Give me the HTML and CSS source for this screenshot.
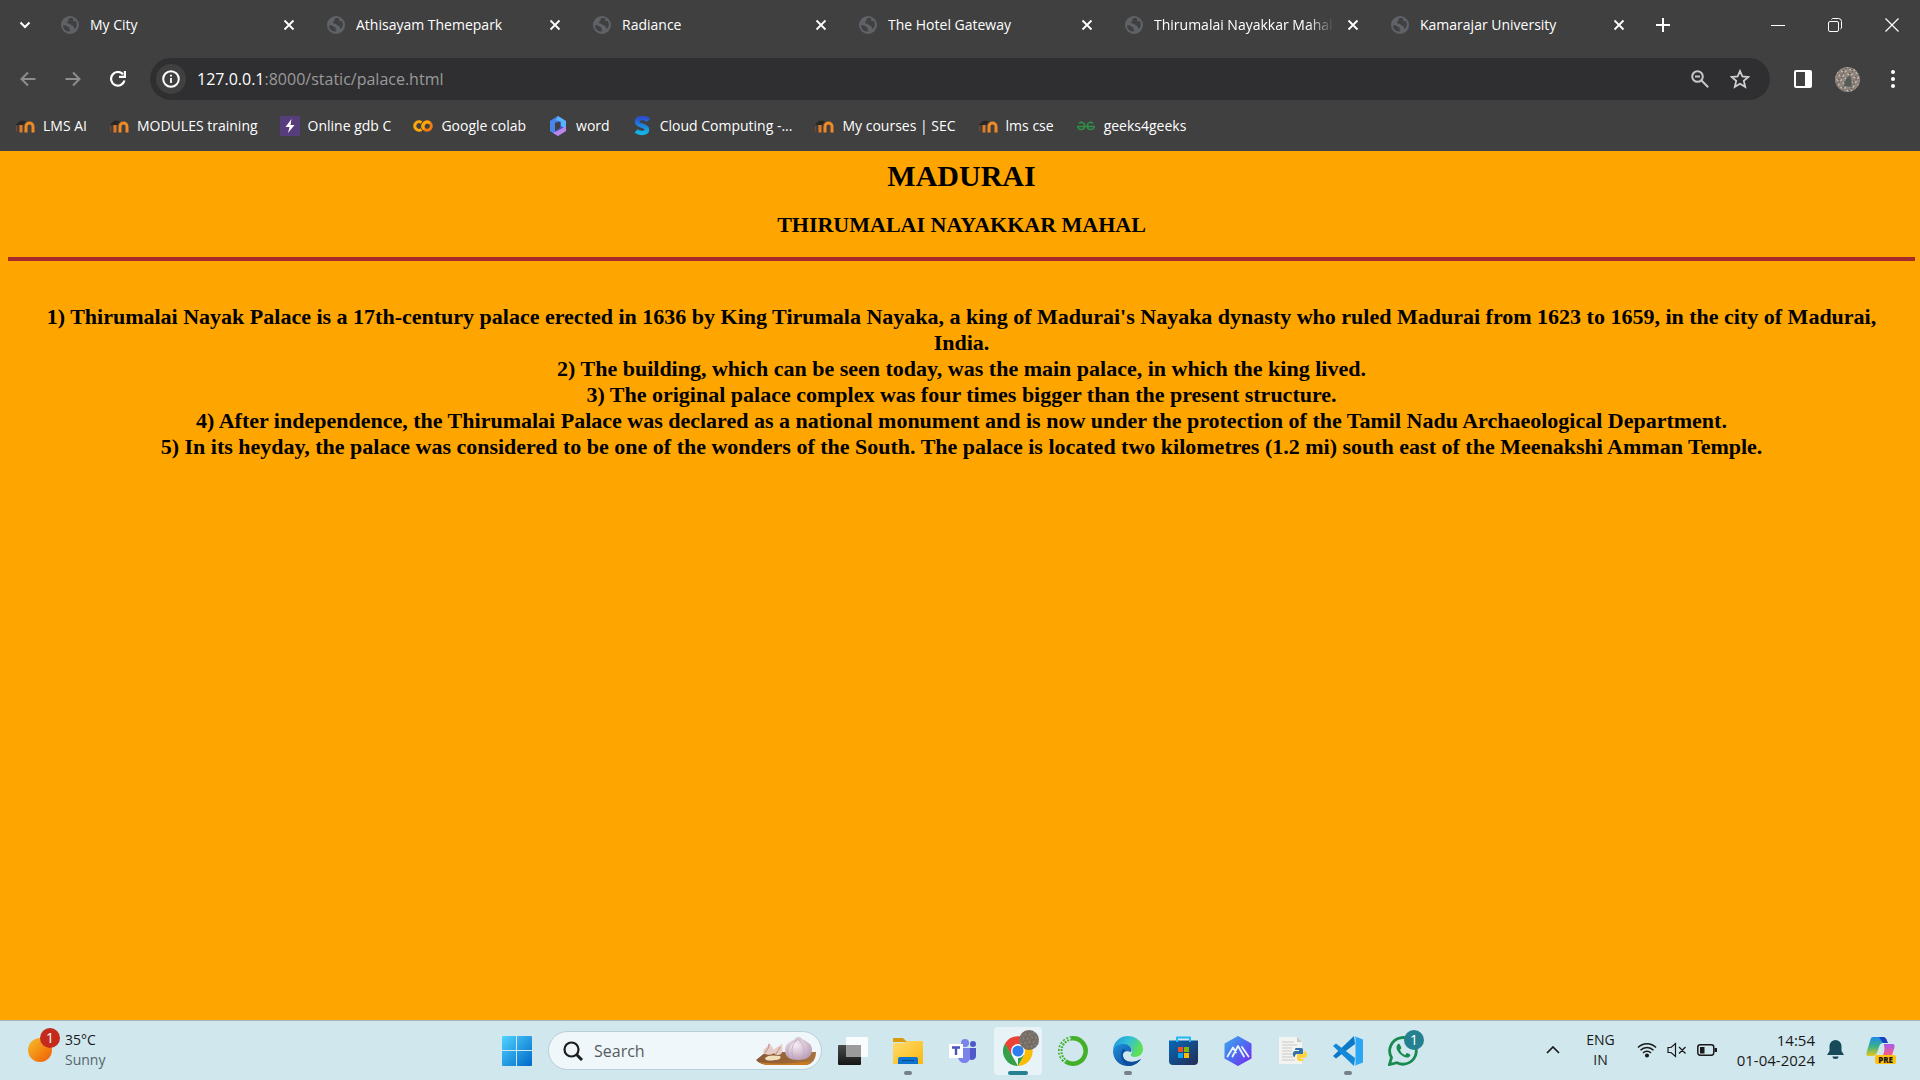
FILE: index.html
```html
<!DOCTYPE html>
<html lang="en">
<head>
<meta charset="utf-8">
<title>Thirumalai Nayakkar Mahal</title>
<link rel="stylesheet" href="styles.css">
</head>
<body>
<svg class="defs" aria-hidden="true">
  <defs>
    <linearGradient id="g-sun" x1="0" y1="0" x2="1" y2="1"><stop offset="0" stop-color="#f2c230"/><stop offset=".6" stop-color="#f4820f"/><stop offset="1" stop-color="#f05a0e"/></linearGradient>
    <linearGradient id="g-win" x1="0" y1="0" x2="1" y2="1"><stop offset="0" stop-color="#4fd3ff"/><stop offset="1" stop-color="#0068c8"/></linearGradient>
    <linearGradient id="g-dark" x1="0" y1="0" x2="0" y2="1"><stop offset="0" stop-color="#4a4a4a"/><stop offset="1" stop-color="#161616"/></linearGradient>
    <linearGradient id="g-folder" x1="0" y1="0" x2="1" y2="1"><stop offset="0" stop-color="#ffdc6e"/><stop offset="1" stop-color="#fbb80f"/></linearGradient>
    <linearGradient id="g-edge" x1="0" y1="0" x2="1" y2=".4"><stop offset="0" stop-color="#1a94e0"/><stop offset=".55" stop-color="#35c1d4"/><stop offset="1" stop-color="#5fe052"/></linearGradient>
    <linearGradient id="g-edge2" x1="0" y1="0" x2="1" y2="1"><stop offset="0" stop-color="#1f8fdf"/><stop offset="1" stop-color="#0c3f88"/></linearGradient>
    <linearGradient id="g-store" x1="0" y1="0" x2="1" y2="1"><stop offset="0" stop-color="#0669b8"/><stop offset="1" stop-color="#262b54"/></linearGradient>
    <linearGradient id="g-hex" x1="0" y1="0" x2="1" y2="1"><stop offset="0" stop-color="#3fa6ea"/><stop offset=".5" stop-color="#4d6cf0"/><stop offset="1" stop-color="#7a28f0"/></linearGradient>
    <linearGradient id="g-word" x1="0" y1="1" x2="1" y2="0"><stop offset="0" stop-color="#c48be8"/><stop offset=".5" stop-color="#4a5fd8"/><stop offset="1" stop-color="#56b8f8"/></linearGradient>
    <linearGradient id="g-s" x1="0" y1="0" x2="0" y2="1"><stop offset="0" stop-color="#2b4fd0"/><stop offset="1" stop-color="#12b4e8"/></linearGradient>
    <linearGradient id="g-board" x1="0" y1="0" x2="1" y2="0"><stop offset="0" stop-color="#8a5a35"/><stop offset="1" stop-color="#a8713c"/></linearGradient>
    <radialGradient id="g-garlic" cx=".4" cy=".35" r=".7"><stop offset="0" stop-color="#f6eef4"/><stop offset="1" stop-color="#b99bb5"/></radialGradient>
    <linearGradient id="g-cop1" x1="0" y1="0" x2="0" y2="1"><stop offset="0" stop-color="#1b8be8"/><stop offset=".5" stop-color="#3db08c"/><stop offset="1" stop-color="#e8c81c"/></linearGradient>
    <linearGradient id="g-cop2" x1="0" y1="0" x2="0" y2="1"><stop offset="0" stop-color="#a45cf0"/><stop offset=".5" stop-color="#ee5a90"/><stop offset="1" stop-color="#f88a50"/></linearGradient>
    <pattern id="p-noise" width="7" height="5" patternUnits="userSpaceOnUse" patternTransform="rotate(27)"><rect width="7" height="5" fill="#8d867e"/><path d="M0 0h2v1H0zM4 3h1v2H4z" fill="#d8d0c8"/><path d="M3 1h1v1H3zM1 4h2v1H1z" fill="#4c5a50"/><path d="M5 0h1v1H5zM2 2h1v1H2z" fill="#b85a4c"/></pattern>
    <symbol id="globe" viewBox="0 0 18 18"><circle cx="9" cy="9" r="9" fill="#5f6368"/><path d="M2 9.200C4.500 9 6 9.500 7 11c1.500 0 2 .800 1.500 2 0 1.500 1 2 2 1.500C9 16 6 15.800 4 14 2.500 12.500 2 11 2 9.200zM8 2.200c-1 1.300.500 1.800-1 2.800-1.500.300-1 1.500-.500 2.500 1.500 0 3 .500 4 2 1.500 0 2.500 1 2.500 2.500 0 1 .500 1 1 .700C16.500 10.500 16.300 7 14.500 4.800c-1 .700-2 .700-2.500-.300C12 3 13 3 12 2.500 11 2 9.500 1.900 8 2.200z" fill="#404040"/></symbol>
    <symbol id="x" viewBox="0 0 12 12"><path d="M1.500 1.500l9 9M10.500 1.500l-9 9" stroke="#fff" stroke-width="1.800"/></symbol>
    <symbol id="moodle" viewBox="0 0 20 20"><path d="M11 16.500v-6a3.500 3.500 0 0 1 7 0v6" fill="none" stroke="#f08a26" stroke-width="3"/><path d="M6 16.500V9" stroke="#e07a24" stroke-width="3"/><path d="M1.500 15.500V10" stroke="#7a4a2c"/><path d="M1 8.500l4.500-3.800L11 5 8 9H3z" fill="#2a2422"/></symbol>
  </defs>
</svg>

<header class="browser">
  <div class="tabstrip">
    <button class="tab-search" aria-label="Search tabs"><svg width="12" height="8" viewBox="0 0 12 8"><path d="M1.500 1.500L6 6l4.500-4.500" fill="none" stroke="#fff" stroke-width="2"/></svg></button>
    <nav class="tabs" aria-label="Tabs">
      <div class="tab"><svg class="favicon"><use href="#globe"/></svg><a class="tab-title" href="#">My City</a><button class="tab-close" aria-label="Close tab"><svg><use href="#x"/></svg></button></div>
      <div class="tab"><svg class="favicon"><use href="#globe"/></svg><a class="tab-title" href="#">Athisayam Themepark</a><button class="tab-close" aria-label="Close tab"><svg><use href="#x"/></svg></button></div>
      <div class="tab"><svg class="favicon"><use href="#globe"/></svg><a class="tab-title" href="#">Radiance</a><button class="tab-close" aria-label="Close tab"><svg><use href="#x"/></svg></button></div>
      <div class="tab"><svg class="favicon"><use href="#globe"/></svg><a class="tab-title" href="#">The Hotel Gateway</a><button class="tab-close" aria-label="Close tab"><svg><use href="#x"/></svg></button></div>
      <div class="tab"><svg class="favicon"><use href="#globe"/></svg><a class="tab-title tab-title-fade" href="#">Thirumalai Nayakkar Mahal</a><button class="tab-close" aria-label="Close tab"><svg><use href="#x"/></svg></button></div>
      <div class="tab"><svg class="favicon"><use href="#globe"/></svg><a class="tab-title" href="#">Kamarajar University</a><button class="tab-close" aria-label="Close tab"><svg><use href="#x"/></svg></button></div>
    </nav>
    <button class="new-tab" aria-label="New tab"><svg width="14" height="14" viewBox="0 0 14 14"><path d="M7 0v14M0 7h14" stroke="#fff" stroke-width="2"/></svg></button>
    <div class="window-controls">
      <button aria-label="Minimize"><svg width="14" height="14" viewBox="0 0 14 14"><path d="M0 7.500h14" stroke="#fff"/></svg></button>
      <button aria-label="Restore"><svg width="14" height="14" viewBox="0 0 14 14" fill="none" stroke="#fff"><rect x=".5" y="3.500" width="10" height="10" rx="1.500"/><path d="M3.500 1.500a2 2 0 0 1 1-1h6a3 3 0 0 1 3 3v6.500a2 2 0 0 1-1 1"/></svg></button>
      <button aria-label="Close"><svg width="14" height="14" viewBox="0 0 14 14"><path d="M.5.500l13 13M13.500.500l-13 13" stroke="#fff" stroke-width="1.200"/></svg></button>
    </div>
  </div>

  <div class="toolbar">
    <div class="nav-buttons">
      <button aria-label="Back"><svg width="16" height="16" viewBox="0 0 16 16"><path d="M15.500 8H2M8 1.500L1.500 8 8 14.500" fill="none" stroke="#8d8d8d" stroke-width="2"/></svg></button>
      <button aria-label="Forward"><svg width="16" height="16" viewBox="0 0 16 16"><path d="M.5 8H14M8 1.500L14.500 8 8 14.500" fill="none" stroke="#8d8d8d" stroke-width="2"/></svg></button>
      <button aria-label="Reload"><svg width="16" height="16" viewBox="0 0 16 16"><path d="M14.500 9.500A6.800 6.800 0 1 1 13 3.300" fill="none" stroke="#fff" stroke-width="2.200"/><path d="M16 0v7H9V4.800h4.800V0z" fill="#fff"/></svg></button>
    </div>
    <div class="omnibox">
      <button class="site-info" aria-label="Site information"><svg width="18" height="18" viewBox="0 0 18 18"><circle cx="9" cy="9" r="7.800" fill="none" stroke="#fff" stroke-width="2"/><path d="M9 8v5M9 4.800v1.800" stroke="#fff" stroke-width="1.800"/></svg></button>
      <div class="url" role="textbox" aria-label="Address"><span class="host">127.0.0.1</span>:8000/static/palace.html</div>
      <button aria-label="Zoom"><svg width="18" height="18" viewBox="0 0 18 18" fill="none" stroke="#c7c7c7" stroke-width="2"><circle cx="6.500" cy="6.500" r="5.300"/><path d="M10.500 10.500l6.700 6.700M4 6.500h5"/></svg></button>
      <button aria-label="Bookmark this page"><svg width="20" height="20" viewBox="0 0 20 20"><path d="M10 2l2.400 5.500 6 .500-4.600 3.900 1.400 5.900L10 14.700l-5.200 3.100 1.400-5.900L1.600 8l6-.500z" fill="none" stroke="#d0d0d0" stroke-width="1.800"/></svg></button>
    </div>
    <div class="toolbar-end">
      <button aria-label="Side panel"><svg width="18" height="18" viewBox="0 0 18 18"><rect x="1" y="1" width="16" height="16" rx="1" fill="none" stroke="#fff" stroke-width="2"/><path d="M11 1h6v16h-6z" fill="#fff"/></svg></button>
      <button aria-label="Profile"><svg width="25" height="25" viewBox="0 0 25 25"><circle cx="12.500" cy="12.500" r="12.500" fill="url(#p-noise)"/><path d="M9 19c1-5 2-9 6-10 2 3 2 7 1 11z" fill="#555c58"/></svg></button>
      <button aria-label="Menu"><svg width="4" height="18" viewBox="0 0 4 18" fill="#fff"><circle cx="2" cy="2" r="2"/><circle cx="2" cy="9" r="2"/><circle cx="2" cy="16" r="2"/></svg></button>
    </div>
  </div>

  <nav class="bookmarks" aria-label="Bookmarks">
    <a href="#"><svg><use href="#moodle"/></svg>LMS AI</a>
    <a href="#"><svg><use href="#moodle"/></svg>MODULES training</a>
    <a href="#"><svg viewBox="0 0 20 20"><path d="M0 0h20v20H0z" fill="#563d7c"/><path d="M11.500 3L5.500 11h4l-1.500 6 6.500-8h-4z" fill="#fff"/></svg>Online gdb C</a>
    <a href="#"><svg viewBox="0 0 20 20" fill="none" stroke-width="3"><path d="M8.500 6.500a4.300 4.300 0 1 0 0 7" stroke="#fba90a"/><circle cx="14" cy="10" r="4.300" stroke="#f27c12"/><path d="M10.800 13a4.300 4.300 0 0 1 6-6" stroke="#fba90a"/></svg>Google colab</a>
    <a href="#"><svg viewBox="0 0 20 20"><path d="M10 0l8 5v10l-8 5-8-5V5z" fill="#3f57cf"/><path d="M10 0L2 5v10l5 3V7l6-4z" fill="#4a86ea"/><path d="M10 0l8 5v8l-5-3V6L8 4z" fill="#58b4f6"/><path d="M18 10v5l-8 5-5-3 8-4z" fill="#bd86e4"/><path d="M7 7l5-1v6l-5 3z" fill="#404040"/></svg>word</a>
    <a href="#"><svg viewBox="0 0 20 20"><path d="M16.500 4.500C13 .500 5 1.500 5 6c0 4 10 3 10 7.500 0 4-7 4.500-11 1.500" fill="none" stroke="url(#g-s)" stroke-width="4.500"/></svg>Cloud Computing -...</a>
    <a href="#"><svg><use href="#moodle"/></svg>My courses | SEC</a>
    <a href="#"><svg><use href="#moodle"/></svg>lms cse</a>
    <a href="#"><svg viewBox="0 0 20 20" fill="none" stroke="#2f8d46" stroke-width="1.600"><path d="M1 10.500h18M3 7.500c2-2 5.500-1 5.500 1.500v1.500c0 4-6 4-6.500.500M17 7.500c-2-2-5.500-1-5.500 1.500v1.500c0 4 6 4 6.500.500"/></svg>geeks4geeks</a>
  </nav>
</header>

<main class="page">
  <h1>MADURAI</h1>
  <h2>THIRUMALAI NAYAKKAR MAHAL</h2>
  <hr>
  <p class="facts">1) Thirumalai Nayak Palace is a 17th-century palace erected in 1636 by King Tirumala Nayaka, a king of Madurai's Nayaka dynasty who ruled Madurai from 1623 to 1659, in the city of Madurai, India.<br>
  2) The building, which can be seen today, was the main palace, in which the king lived.<br>
  3) The original palace complex was four times bigger than the present structure.<br>
  4) After independence, the Thirumalai Palace was declared as a national monument and is now under the protection of the Tamil Nadu Archaeological Department.<br>
  5) In its heyday, the palace was considered to be one of the wonders of the South. The palace is located two kilometres (1.2 mi) south east of the Meenakshi Amman Temple.</p>
</main>

<footer class="taskbar">
  <button class="weather">
    <span class="weather-icon"><svg width="24" height="24" viewBox="0 0 24 24"><circle cx="12" cy="12" r="12" fill="url(#g-sun)"/></svg><span class="badge badge-red">1</span></span>
    <span class="weather-text"><span>35°C</span><span class="muted">Sunny</span></span>
  </button>

  <div class="apps">
    <button class="app" aria-label="Start"><svg width="30" height="30" viewBox="0 0 30 30"><path d="M1 0h13v14H0V1a1 1 0 0 1 1-1zM15 0h14a1 1 0 0 1 1 1v13H15zM0 15h14v15H1a1 1 0 0 1-1-1zM15 15h15v14a1 1 0 0 1-1 1H15z" fill="url(#g-win)"/></svg></button>
    <label class="search">
      <svg width="20" height="20" viewBox="0 0 20 20" fill="none" stroke="#1d1d1d"><circle cx="8.500" cy="8.500" r="7" stroke-width="2.200"/><path d="M13.500 13.500l5.500 5.500" stroke-width="3"/></svg>
      <input type="text" placeholder="Search" aria-label="Search">
      <svg width="62" height="32" viewBox="0 0 62 32"><path d="M1 25l10-8h50c0 6-3 12-10 13H15C8 30 4 28 1 25z" fill="url(#g-board)"/><path d="M4 27c14 2 36 2 52-1-2 3-4 4-6 4H15c-5 0-8-1-11-3z" fill="#c87a1e"/><path d="M42 2c2 1 3-1 4 1 2 2 4 2 6 4 4 2 5 5 5 8 0 7-6 10-14 10S30 22 30 15c0-4 2-7 6-9 2-1 4-2 6-4z" fill="url(#g-garlic)"/><path d="M43 4c-6 4-8 14-4 20M43 4c6 5 8 14 4 20M42 5c-9 3-11 11-8 17" fill="none" stroke="#b7a0b7" stroke-width=".6"/><path d="M14 7c1 4 6 6 5 11-3 3-10 2-11-1 1-5 6-5 6-10zM27 8c0 4 2 8-1 11-3 2-7 1-8-3 2-4 7-4 9-8z" fill="#e6cdc6"/><path d="M14 9c0 4-2 6-4 9M25 12c-1 3-3 4-4 7" fill="none" stroke="#b98f8c"/><path d="M10 23c3-3 8-3 15-2 2 2-1 4-5 4-4 1-10 1-10-2z" fill="#f2e0bd"/></svg>
    </label>
    <button class="app" aria-label="Task view"><svg width="30" height="28" viewBox="0 0 30 28"><rect y="8" width="23" height="20" rx="1" fill="url(#g-dark)"/><rect x="8" width="22" height="20" rx="1" fill="#fff" opacity=".85"/><path d="M8 8h15v12H8z" fill="#9b9b9b"/></svg></button>
    <button class="app running" aria-label="File Explorer"><svg width="30" height="28" viewBox="0 0 30 28"><path d="M0 2a1 1 0 0 1 1-1h9l4 4H0z" fill="#d99a0b"/><path d="M0 6h11l3-2h15a1 1 0 0 1 1 1v22H0z" fill="url(#g-folder)"/><path d="M5 27v-5a2 2 0 0 1 2-2h16a2 2 0 0 1 2 2v5z" fill="#0c73cf"/><path d="M9 23.500h12" stroke="#084a90"/></svg></button>
    <button class="app" aria-label="Teams"><svg width="28" height="26" viewBox="0 0 28 26"><circle cx="16" cy="5" r="4" fill="#7b83eb"/><circle cx="24" cy="6" r="3" fill="#5059c9"/><path d="M19 10h8v8c0 4-5 5-7 3z" fill="#5059c9"/><path d="M9 10h12v9c0 8-11 8-12 0z" fill="#7b83eb"/><path d="M0 6h14v14H0z" fill="#fff"/><path d="M3 9.500h8M7 9.500V17" stroke="#4b53bc" stroke-width="2.400"/></svg></button>
    <button class="app active" aria-label="Chrome"><svg width="30" height="30" viewBox="0 0 30 30"><path d="M2 7.500L15 30A15 15 0 0 1 2 7.500z" fill="#34a04a"/><path d="M2 7.500l6.500 11.200L15 15zM15 30l6.500-11.200L15 15z" fill="#34a04a"/><path d="M21.500 18.800L15 30A15 15 0 0 0 28 8H15z" fill="#fbbc05"/><path d="M2 7.500A15 15 0 0 1 28 8H15l-6.500 10.700z" fill="#ea4335"/><circle cx="15" cy="15" r="7" fill="#fff"/><circle cx="15" cy="15" r="5.600" fill="#2d7ff0"/></svg><svg class="profile-badge" viewBox="0 0 20 20"><circle cx="10" cy="10" r="10" fill="#6d655e"/><circle cx="10" cy="10" r="10" fill="url(#p-noise)" opacity=".35"/></svg></button>
    <button class="app" aria-label="Anaconda"><svg width="30" height="30" viewBox="0 0 30 30" fill="none"><path d="M14 2.300A12.700 12.700 0 1 1 8 25.600" stroke="#43b02a" stroke-width="4.500"/><path d="M14 2.300A12.700 12.700 0 0 0 8 25.600" stroke="#43b02a" stroke-width="4.500" stroke-dasharray="2 1.400"/><path d="M13 2.300A12.700 12.700 0 0 0 7 25" stroke="#cfe7ed" stroke-width="1"/></svg></button>
    <button class="app running" aria-label="Edge"><svg width="30" height="30" viewBox="0 0 30 30"><path d="M0 15C0 6 7 0 15 0s15 6 15 13c0 5-4 8-8 8-3 0-5-1-4-3 3-4 0-9-6-9C6 9 1 11 0 15z" fill="url(#g-edge)"/><path d="M0 15C1 10 6 8 10 8c7 0 10 5 8 8-6-2-9 1-8 5 1 5 10 7 18 2-3 4-7 7-13 7C7 30 0 24 0 15z" fill="url(#g-edge2)"/><path d="M10 13c-3 4-3 12 5 17 6 0 10-3 13-7-8 5-17 3-18-3-.500-3 1-5 3-6z" fill="#0d4f9e"/></svg></button>
    <button class="app" aria-label="Microsoft Store"><svg width="29" height="29" viewBox="0 0 29 29"><path d="M0 4.500h29V25a4 4 0 0 1-4 4H4a4 4 0 0 1-4-4z" fill="url(#g-store)"/><path d="M7 6V1.500a1 1 0 0 1 1-1h13a1 1 0 0 1 1 1V6h-2V2.500H9V6z" fill="#25b7f2"/><path d="M9 11h5v5H9z" fill="#f25022"/><path d="M15 11h5v5h-5z" fill="#7fba00"/><path d="M9 17h5v5H9z" fill="#00a4ef"/><path d="M15 17h5v5h-5z" fill="#ffb900"/></svg></button>
    <button class="app" aria-label="Studio"><svg width="28" height="30" viewBox="0 0 28 30"><path d="M14 1l12.500 7v14L14 29 1.500 22V8z" fill="url(#g-hex)" stroke="url(#g-hex)" stroke-width="2" stroke-linejoin="round"/><path d="M3.500 20.500L9 11.500l3 5M8.500 20.500L14 10l6 10.500M18 11l6.500 9.500" fill="none" stroke="#e8f4ff" stroke-width="1.800" stroke-linecap="round" stroke-linejoin="round"/></svg></button>
    <button class="app" aria-label="Python IDLE"><svg width="28" height="30" viewBox="0 0 28 30"><path d="M0 1h18l5 5v22H0z" fill="#f3f3f1"/><path d="M18 1v5h5z" fill="#c8c8c8"/><path d="M3 6h12M3 9h15M3 12h10M3 15h10M3 18h10M3 21h12M3 24h13" stroke="#c9c9c9"/><path d="M17 12h5c2 0 2 1 2 3v3h-6c-2 0-2 2-2 3-3 0-3-6 0-6h4v-1h-4c0-1 0-2 1-2z" fill="#3572a5"/><path d="M25 15c4 0 4 7 0 7h-3v1h3c0 3-7 3-7 0v-3c0-2 1-2 2-2h3c2 0 2-1 2-3z" fill="#ffd342"/></svg></button>
    <button class="app running" aria-label="Visual Studio Code"><svg width="30" height="30" viewBox="0 0 30 30"><path d="M22 8L3 22.500 0 20l21-20z" fill="#0a79c8"/><path d="M22 22L3 7.500 0 10l21 20z" fill="#1488d8"/><path d="M21 0l9 3.500v23L21 30c.800 0 1.500-.800 1.500-2V2C22.500.800 22 0 21 0z" fill="#2ba6f5"/></svg></button>
    <button class="app" aria-label="WhatsApp"><svg width="30" height="30" viewBox="0 0 30 30"><path d="M1.500 28.500l2-7A13.300 13.300 0 1 1 9 26.700z" fill="none" stroke="#188a4e" stroke-width="2.800"/><path d="M10 8c-3 3-1 7 2 10s8 5 10 2c1-1 0-2-3-3-1 0-1 2-2 2-3-1-4-3-5-5 0-1 2-1 1-3-1-3-2-4-3-3z" fill="#188a4e"/></svg><span class="badge badge-teal">1</span></button>
  </div>

  <div class="tray">
    <button aria-label="Show hidden icons"><svg width="14" height="8" viewBox="0 0 14 8"><path d="M1 7l6-6 6 6" fill="none" stroke="#1a1a1a" stroke-width="1.700"/></svg></button>
    <button class="language"><span>ENG</span><span>IN</span></button>
    <button class="status" aria-label="Network, volume and battery">
      <svg width="20" height="16" viewBox="0 0 20 16" fill="none" stroke="#1a1a1a" stroke-width="1.500"><path d="M1 5.500a12.500 12.500 0 0 1 18 0M3.500 8.300a9 9 0 0 1 13 0M6 11a5.600 5.600 0 0 1 8 0"/><circle cx="10" cy="13.500" r="1.300" fill="#1a1a1a"/></svg>
      <svg width="20" height="16" viewBox="0 0 20 16" fill="none" stroke="#1a1a1a" stroke-width="1.200"><path d="M1 5.500h3L8.500 1.500v13L4 10.500H1zM12 5l6.500 6.500M18.500 5L12 11.500"/></svg>
      <svg width="20" height="12" viewBox="0 0 20 12"><rect x=".800" y=".800" width="16" height="10.500" rx="2.500" fill="none" stroke="#1a1a1a" stroke-width="1.500"/><path d="M3 3h4.500v6.500H3zM17.500 4H20v4h-2.500z" fill="#1a1a1a"/></svg>
    </button>
    <button class="clock"><span>14:54</span><span>01-04-2024</span></button>
    <button class="bell" aria-label="Notifications"><svg width="17" height="19" viewBox="0 0 17 19"><path d="M8.500 0a6 6 0 0 1 6 6v5l2.500 4H0l2.500-4V6a6 6 0 0 1 6-6zM5.500 16.500h6a3 2.500 0 0 1-6 0z" fill="#164a58"/></svg></button>
    <button class="copilot" aria-label="Copilot"><svg width="29" height="28" viewBox="0 0 29 28"><path d="M7 1h10c2 0 3 1 4 4l1 2h-5c-2 0-3 1-4 4l-2 6c-1 2-2 3-4 3H3c-3 0-3-2-2-5L4 5c1-3 1-4 3-4z" fill="url(#g-cop1)"/><path d="M13 1h4c2 0 3 1 4 4l1 2h-5z" fill="#1b3fc0"/><path d="M18 8h8c3 0 3 2 2 5l-3 9c-1 3-2 4-4 4h-9c2 0 3-1 4-4l2-6c1-3 0-5 0-8z" fill="url(#g-cop2)"/></svg><span class="pre">PRE</span></button>
  </div>
</footer>
</body>
</html>
```
FILE: styles.css
```css
* {
  box-sizing: border-box;
}

body {
  margin: 0;
  min-height: 100vh;
  display: flex;
  flex-direction: column;
  font-family: "Open Sans", "Noto Sans", sans-serif;
  font-size: 14px;
  line-height: 20px;
}

button {
  display: flex;
  align-items: center;
  justify-content: center;
  margin: 0;
  padding: 0;
  border: 0;
  background: none;
  color: inherit;
  font: inherit;
}

a {
  color: inherit;
  text-decoration: none;
}

svg {
  display: block;
  flex: none;
}

.defs {
  position: absolute;
  width: 0;
  height: 0;
}

/* Browser frame */

.browser {
  background: #404040;
  color: #fff;
}

.tabstrip {
  display: flex;
  align-items: center;
  height: 50px;
}

.tab-search {
  width: 50px;
  height: 50px;
}

.tabs {
  flex: 0 1 1596px;
  display: flex;
  min-width: 0;
}

.tab {
  flex: 1 1 0;
  min-width: 0;
  display: flex;
  align-items: center;
  padding: 0 11px;
}

.favicon {
  width: 18px;
  height: 18px;
  margin-right: 11px;
}

.tab-title {
  flex: 1;
  min-width: 0;
  overflow: hidden;
  white-space: nowrap;
}

.tab-title-fade {
  mask-image: linear-gradient(to right, #000 154px, transparent 180px);
}

.tab-close {
  width: 32px;
  height: 20px;
}

.tab-close svg {
  width: 12px;
  height: 12px;
}

.new-tab {
  width: 34px;
  height: 34px;
}

.window-controls {
  display: flex;
  margin-left: auto;
}

.window-controls button {
  width: 57px;
  height: 50px;
}

.toolbar {
  display: flex;
  align-items: center;
  height: 58px;
}

.nav-buttons {
  display: flex;
  padding: 0 10px 0 5px;
}

.nav-buttons button {
  width: 45px;
  height: 42px;
}

.omnibox {
  flex: 1;
  display: flex;
  align-items: center;
  height: 42px;
  padding: 0 10px 0 6px;
  border-radius: 21px;
  background: #2f2f31;
}

.omnibox button {
  width: 40px;
  height: 30px;
}

.omnibox .site-info {
  width: 30px;
  border-radius: 15px;
  background: #404040;
}

.url {
  flex: 1;
  padding-left: 11px;
  color: #9a9a9a;
  font-size: 16px;
  line-height: 24px;
}

.host {
  color: #fff;
}

.toolbar-end {
  display: flex;
  padding: 0 5px 0 10px;
}

.toolbar-end button {
  width: 45px;
  height: 30px;
}

.bookmarks {
  display: flex;
  align-items: center;
  gap: 22px;
  height: 43px;
  padding: 0 15px 7px;
}

.bookmarks a {
  display: flex;
  align-items: center;
  gap: 8px;
  white-space: nowrap;
}

.bookmarks svg {
  width: 20px;
  height: 20px;
}

/* Page content */

.page {
  flex: 1;
  padding: 8px 5px 8px 8px;
  background: #ffa500;
  color: #000;
  font-family: "Liberation Serif", "Times New Roman", serif;
  font-weight: bold;
  text-align: center;
}

.page h1 {
  margin: 0 0 18px;
  font-size: 30px;
  line-height: 34px;
}

.page h2 {
  margin: 0 0 18px;
  font-size: 22px;
  line-height: 28px;
}

.page hr {
  height: 4px;
  margin: 0;
  border: 0;
  background: #a52a2a;
}

.facts {
  margin: 43px 0 0;
  padding: 0 16px;
  font-size: 22px;
  line-height: 26px;
}

/* Taskbar */

.taskbar {
  display: grid;
  grid-template-columns: 1fr auto 1fr;
  align-items: center;
  height: 60px;
  border-top: 1px solid #a5b4b8;
  background: #cfe7ed;
  color: #1a1a1a;
}

.weather {
  justify-self: start;
  gap: 13px;
  padding: 0 0 2px 28px;
  text-align: left;
}

.weather-icon {
  position: relative;
}

.weather-text,
.language,
.clock {
  display: flex;
  flex-direction: column;
}

.muted {
  color: #56656a;
}

.badge {
  position: absolute;
  width: 20px;
  height: 20px;
  border-radius: 10px;
  color: #fff;
  text-align: center;
}

.badge-red {
  top: -10px;
  right: -8px;
  background: #c42b1c;
}

.badge-teal {
  top: 3px;
  right: 3px;
  background: #25808f;
}

.apps {
  display: flex;
  align-items: center;
  gap: 7px;
}

.app {
  position: relative;
  width: 48px;
  height: 48px;
  border-radius: 4px;
}

.active {
  background: #e7f3f7;
}

.running::after,
.active::after {
  content: "";
  position: absolute;
  bottom: 0;
  width: 8px;
  height: 4px;
  border-radius: 2px;
  background: #758287;
}

.active::after {
  width: 20px;
  background: #25808f;
}

.profile-badge {
  position: absolute;
  top: 3px;
  right: 3px;
  width: 20px;
  height: 20px;
}

.search {
  display: flex;
  align-items: center;
  width: 274px;
  height: 39px;
  padding: 0 4px 0 14px;
  border: 1px solid #b7cfd6;
  border-radius: 20px;
  background: #f0f7fa;
}

.search input {
  flex: 1;
  min-width: 0;
  padding: 0 0 0 11px;
  border: 0;
  outline: 0;
  background: none;
  font: inherit;
  font-size: 16px;
}

.search input::placeholder {
  color: #555c5f;
  opacity: 1;
}

.tray {
  justify-self: end;
  display: flex;
  align-items: center;
  padding-bottom: 2px;
}

.language {
  margin-left: 26px;
}

.status {
  gap: 10px;
  margin-left: 22px;
}

.clock {
  align-items: flex-end;
  margin-left: 20px;
  font-size: 15px;
}

.bell {
  margin-left: 12px;
}

.copilot {
  position: relative;
  margin: 0 25px 0 22px;
}

.pre {
  position: absolute;
  right: -1px;
  bottom: 0;
  padding: 0 3px;
  border-radius: 2px;
  background: #ffc20e;
  color: #1a1a1a;
  font-size: 8px;
  font-weight: 800;
  line-height: 9px;
}
```
